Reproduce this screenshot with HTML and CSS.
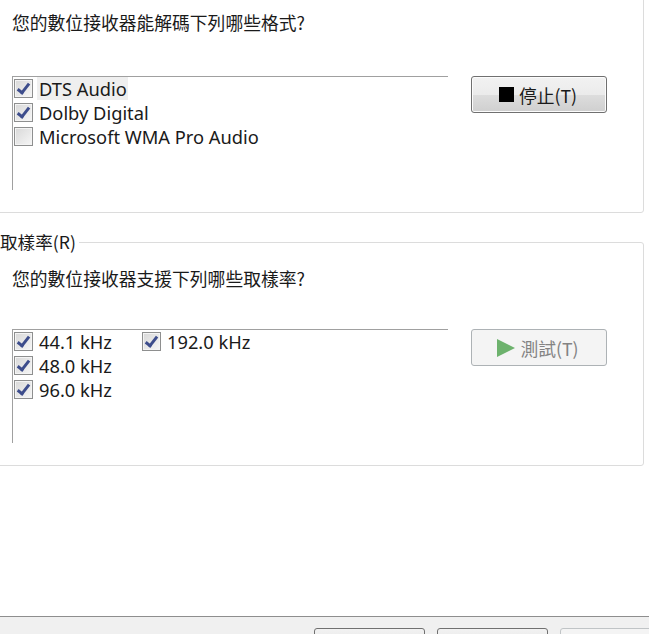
FILE: index.html
```html
<!DOCTYPE html>
<html lang="zh-Hant">
<head>
<meta charset="utf-8">
<title>數位接收器</title>
<link rel="stylesheet" href="styles.css">
</head>
<body>
<div class="main">
  <section class="group group-formats">
    <p class="question">您的數位接收器能解碼下列哪些格式?</p>
    <div class="row">
      <ul class="list">
        <li class="item selected"><span class="cb checked"></span><span class="label">DTS Audio</span></li>
        <li class="item"><span class="cb checked"></span><span class="label">Dolby Digital</span></li>
        <li class="item"><span class="cb"></span><span class="label">Microsoft WMA Pro Audio</span></li>
      </ul>
      <button class="btn">
        <svg class="ico" width="15" height="15" viewBox="0 0 15 15"><rect x="0" y="0" width="15" height="15" fill="#000"/></svg>
        <span>停止(T)</span>
      </button>
    </div>
  </section>

  <fieldset class="group group-rates">
    <legend>取樣率(R)</legend>
    <p class="question">您的數位接收器支援下列哪些取樣率?</p>
    <div class="row">
      <div class="list list-cols">
        <ul class="col">
          <li class="item"><span class="cb checked"></span><span class="label">44.1 kHz</span></li>
          <li class="item"><span class="cb checked"></span><span class="label">48.0 kHz</span></li>
          <li class="item"><span class="cb checked"></span><span class="label">96.0 kHz</span></li>
        </ul>
        <ul class="col">
          <li class="item"><span class="cb checked"></span><span class="label">192.0 kHz</span></li>
        </ul>
      </div>
      <button class="btn btn-disabled">
        <svg class="ico" width="18" height="18" viewBox="0 0 18 18"><path d="M0 0 L18 9 L0 18 Z" fill="#6db26d"/></svg>
        <span>測試(T)</span>
      </button>
    </div>
  </fieldset>
</div>
<div class="footer">
  <button class="fbtn"></button>
  <button class="fbtn"></button>
  <button class="fbtn fbtn-disabled"></button>
</div>
</body>
</html>
```
FILE: styles.css
```css
html, body {
  margin: 0;
  padding: 0;
}
body {
  width: 649px;
  height: 634px;
  overflow: hidden;
  background: #ffffff;
  font-family: "Noto Sans", "Noto Sans CJK TC", sans-serif;
  color: #1a1a1a;
}
.main {
  height: 616px;
  overflow: hidden;
}
.group {
  border: 1px solid #dcdcdc;
  border-radius: 3px;
  margin: 0 5px 0 -10px;
  padding: 0 0 22px 21px;
}
.group-formats {
  margin-top: -30px;
  padding-top: 39px;
}
.question {
  margin: 0;
  font-family: "Noto Sans CJK TC", sans-serif;
  font-size: 17.8px;
  line-height: 24px;
  color: #1a1a1a;
}
.row {
  display: flex;
  align-items: flex-start;
  margin-top: 42px;
}
.list {
  list-style: none;
  margin: 0;
  padding: 0 0 0 1px;
  width: 434px;
  height: 113px;
  border-top: 1px solid #a0a0a0;
  border-left: 1px solid #a0a0a0;
  box-sizing: content-box;
}
.item {
  display: flex;
  align-items: center;
  height: 24px;
  font-size: 18.3px;
  white-space: nowrap;
}
.list > .item:first-child,
.col > .item:first-child {
  margin-top: -1px;
}
.cb {
  flex: none;
  width: 19px;
  height: 19px;
  box-sizing: border-box;
  border: 1px solid #8e8f8f;
  background: linear-gradient(135deg, #d8d8d8 0%, #f6f6f6 100%);
  box-shadow: inset 0 0 0 1px #f4f4f4;
  margin: 0 4px 0 0;
  position: relative;
}
.cb.checked::after {
  content: "";
  position: absolute;
  left: 5px;
  top: 1px;
  width: 4px;
  height: 10px;
  border-right: 3px solid #3d4d8c;
  border-bottom: 3px solid #3d4d8c;
  transform: rotate(38deg);
}
.label {
  padding: 0 1px 0 2px;
  line-height: 23px;
}
.item.selected .label {
  background: #efefef;
}
.btn {
  flex: none;
  margin: 0 0 0 23px;
  width: 136px;
  height: 37px;
  box-sizing: border-box;
  border: 1px solid #707070;
  border-radius: 3px;
  background: linear-gradient(#f2f2f2 0%, #ebebeb 50%, #dddddd 51%, #cfcfcf 100%);
  box-shadow: inset 0 0 0 1px #fcfcfc;
  display: flex;
  align-items: center;
  justify-content: center;
  gap: 5px;
  font-family: "Noto Sans CJK TC", sans-serif;
  font-size: 17.8px;
  color: #1a1a1a;
  padding: 0 2px 0 0;
}
.btn-disabled {
  border-color: #adb2b5;
  background: #f4f4f4;
  box-shadow: none;
  color: #838383;
}
.group-rates {
  margin-top: 19px;
  padding-top: 14px;
  min-width: 0;
}
.group-rates legend {
  margin-left: -12px;
  padding: 0 3px 0 0;
  font-family: "Noto Sans CJK TC", sans-serif;
  font-size: 17.6px;
  line-height: 20px;
  color: #1a1a1a;
}
.group-rates .row {
  margin-top: 39px;
}
.list-cols {
  display: flex;
  gap: 0;
}
.col {
  list-style: none;
  margin: 0;
  padding: 0;
}
.col:first-child {
  width: 128px;
}
.footer {
  height: 18px;
  border-top: 1px solid #8e8e8e;
  background: #f0f0f0;
  display: flex;
  gap: 12px;
  padding: 11px 0 0 314px;
  box-sizing: border-box;
  overflow: hidden;
}
.fbtn {
  flex: none;
  width: 111px;
  height: 30px;
  border: 1px solid #707070;
  border-radius: 3px;
  background: linear-gradient(#f2f2f2, #dddddd);
  padding: 0;
}
.fbtn-disabled {
  border-color: #c0c4c6;
  background: #f4f4f4;
}
```
